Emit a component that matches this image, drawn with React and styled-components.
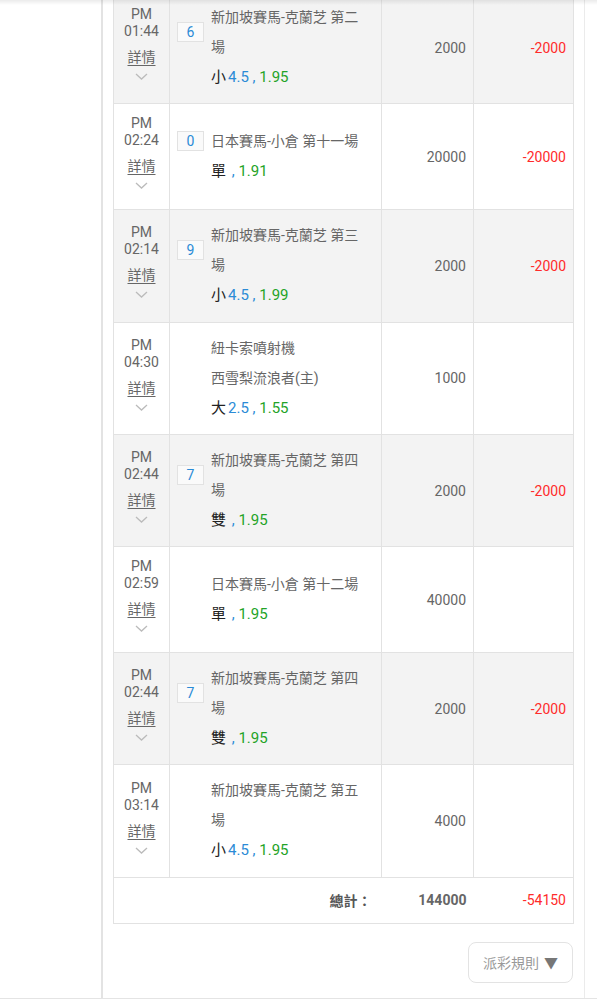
import styled, { createGlobalStyle } from "styled-components";

const GlobalStyle = createGlobalStyle`
  html, body {
    margin: 0;
    padding: 0;
    background: #fff;
    font-family: Roboto, "Noto Sans CJK TC", "Noto Sans", sans-serif;
  }
  * {
    box-sizing: border-box;
  }
`;

const Page = styled.div`
  position: relative;
  display: flex;
  width: 597px;
  height: 999px;
  border-bottom: 1px solid #e4e4e4;
  overflow: hidden;

  &::after {
    content: "";
    position: absolute;
    top: 0;
    left: 0;
    right: 0;
    height: 5px;
    background: linear-gradient(rgba(0, 0, 0, 0.08), rgba(0, 0, 0, 0));
  }
`;

const Side = styled.div`
  width: 103px;
  flex-shrink: 0;
  background: #fff;
  border-right: 2px solid #e3e3e3;
`;

const Main = styled.div`
  width: 482px;
  flex-shrink: 0;
  padding: 0 11px 0 10px;
  border-right: 1px solid #ebebeb;
`;

const Table = styled.table`
  width: 460px;
  margin-top: -9px;
  table-layout: fixed;
  border-collapse: collapse;
  border: 1px solid #e2e2e2;
`;

const Row = styled.tr`
  background: ${(p) => (p.$shaded ? "#f3f3f3" : "#fff")};
`;

const Cell = styled.td`
  border: 1px solid #e2e2e2;
  vertical-align: middle;
  padding: 0;
`;

const TimeCell = styled(Cell)`
  text-align: center;
  padding: 11px 0 13px;
  color: #666;
  font-size: 14px;
`;

const TimeLine = styled.div`
  line-height: 17px;
`;

const Detail = styled.div`
  margin-top: 4px;
  line-height: 25px;
  text-decoration: underline;
  text-underline-offset: 3px;
  font-family: "Noto Sans CJK TC", sans-serif;
`;

const Chevron = styled.div`
  height: 18px;
  padding-top: 4px;
  display: flex;
  justify-content: center;
  align-items: flex-start;
`;

const EventCell = styled(Cell)`
  padding: 10px 15px 10.3px 7px;
`;

const EventGrid = styled.div`
  display: grid;
  grid-template-columns: 27px 1fr;
  column-gap: 7px;
  align-items: center;
`;

const Badge = styled.div`
  height: 20px;
  border: 1px solid #e2e2e2;
  background: #fafafa;
  color: #2b8bd6;
  font-size: 14px;
  line-height: 18px;
  text-align: center;
`;

const Name = styled.div`
  grid-column: 2;
  color: #666;
  font-size: 14px;
  line-height: 30px;
`;

const Bet = styled.div`
  grid-column: 2;
  font-size: 15px;
  line-height: 31px;
  white-space: nowrap;
`;

const Pick = styled.span`
  color: #222;
  margin-right: 2px;
`;

const Blue = styled.span`
  color: #2b8bd6;
`;

const Green = styled.span`
  color: #23a327;
`;

const NumCell = styled(Cell)`
  text-align: right;
  padding-right: 7px;
  font-size: 14px;
  color: ${(p) => (p.$red ? "#ff2b2b" : "#666")};
  font-weight: ${(p) => (p.$bold ? 700 : 400)};
`;

const TotalRow = styled.tr`
  height: 46px;
  background: #fff;
`;

const TotalLabel = styled.td`
  text-align: right;
  padding-right: 10px;
  font-size: 14px;
  font-weight: 700;
  color: #555;
`;

const TotalNum = styled(NumCell)`
  border: none;
`;

const Footer = styled.div`
  display: flex;
  justify-content: flex-end;
  padding-top: 18px;
`;

const RuleButton = styled.button`
  display: flex;
  align-items: center;
  gap: 5px;
  height: 41px;
  width: 105px;
  padding: 0 0 0 14px;
  background: #fff;
  border: 1px solid #e3e3e3;
  border-radius: 8px;
  color: #999;
  font-family: "Noto Sans CJK TC", sans-serif;
  font-size: 14px;
`;

const Arrow = styled.span`
  color: #777;
  font-size: 14px;
`;

const rows = [
  { time: "01:44", badge: "6", name: ["新加坡賽馬-克蘭芝 第二場"], pick: "小", line: "4.5", odds: "1.95", amount: "2000", result: "-2000" },
  { time: "02:24", badge: "0", name: ["日本賽馬-小倉 第十一場"], pick: "單", odds: "1.91", amount: "20000", result: "-20000" },
  { time: "02:14", badge: "9", name: ["新加坡賽馬-克蘭芝 第三場"], pick: "小", line: "4.5", odds: "1.99", amount: "2000", result: "-2000" },
  { time: "04:30", name: ["紐卡索噴射機", "西雪梨流浪者(主)"], pick: "大", line: "2.5", odds: "1.55", amount: "1000", result: "" },
  { time: "02:44", badge: "7", name: ["新加坡賽馬-克蘭芝 第四場"], pick: "雙", odds: "1.95", amount: "2000", result: "-2000" },
  { time: "02:59", name: ["日本賽馬-小倉 第十二場"], pick: "單", odds: "1.95", amount: "40000", result: "" },
  { time: "02:44", badge: "7", name: ["新加坡賽馬-克蘭芝 第四場"], pick: "雙", odds: "1.95", amount: "2000", result: "-2000" },
  { time: "03:14", name: ["新加坡賽馬-克蘭芝 第五場"], pick: "小", line: "4.5", odds: "1.95", amount: "4000", result: "" },
];

const ChevronIcon = () => (
  <svg width="13" height="7" viewBox="0 0 13 7">
    <path d="M1 1 L6.5 6 L12 1" fill="none" stroke="#bbb" strokeWidth="1.3" />
  </svg>
);

const App = () => {
  return (
    <>
      <GlobalStyle />
      <Page>
        <Side />
        <Main>
          <Table>
            <colgroup>
              <col style={{ width: 56 }} />
              <col style={{ width: 212 }} />
              <col style={{ width: 92 }} />
              <col style={{ width: 100 }} />
            </colgroup>
            <tbody>
              {rows.map((r, i) => (
                <Row key={i} $shaded={i % 2 === 0}>
                  <TimeCell>
                    <TimeLine>PM</TimeLine>
                    <TimeLine>{r.time}</TimeLine>
                    <Detail>詳情</Detail>
                    <Chevron>
                      <ChevronIcon />
                    </Chevron>
                  </TimeCell>
                  <EventCell>
                    <EventGrid>
                      {r.badge ? <Badge>{r.badge}</Badge> : <span />}
                      <Name>{r.name[0]}</Name>
                      {r.name.slice(1).map((n) => (
                        <Name key={n}>{n}</Name>
                      ))}
                      <Bet>
                        <Pick>{r.pick}</Pick>
                        {r.line && <Blue>{r.line}</Blue>}
                        <Blue> ,</Blue>
                        <Green> {r.odds}</Green>
                      </Bet>
                    </EventGrid>
                  </EventCell>
                  <NumCell>{r.amount}</NumCell>
                  <NumCell $red>{r.result}</NumCell>
                </Row>
              ))}
              <TotalRow>
                <TotalLabel colSpan={2}>總計：</TotalLabel>
                <TotalNum $bold>144000</TotalNum>
                <TotalNum $red>-54150</TotalNum>
              </TotalRow>
            </tbody>
          </Table>
          <Footer>
            <RuleButton>
              派彩規則
              <Arrow>▼</Arrow>
            </RuleButton>
          </Footer>
        </Main>
      </Page>
    </>
  );
};

export default App;
